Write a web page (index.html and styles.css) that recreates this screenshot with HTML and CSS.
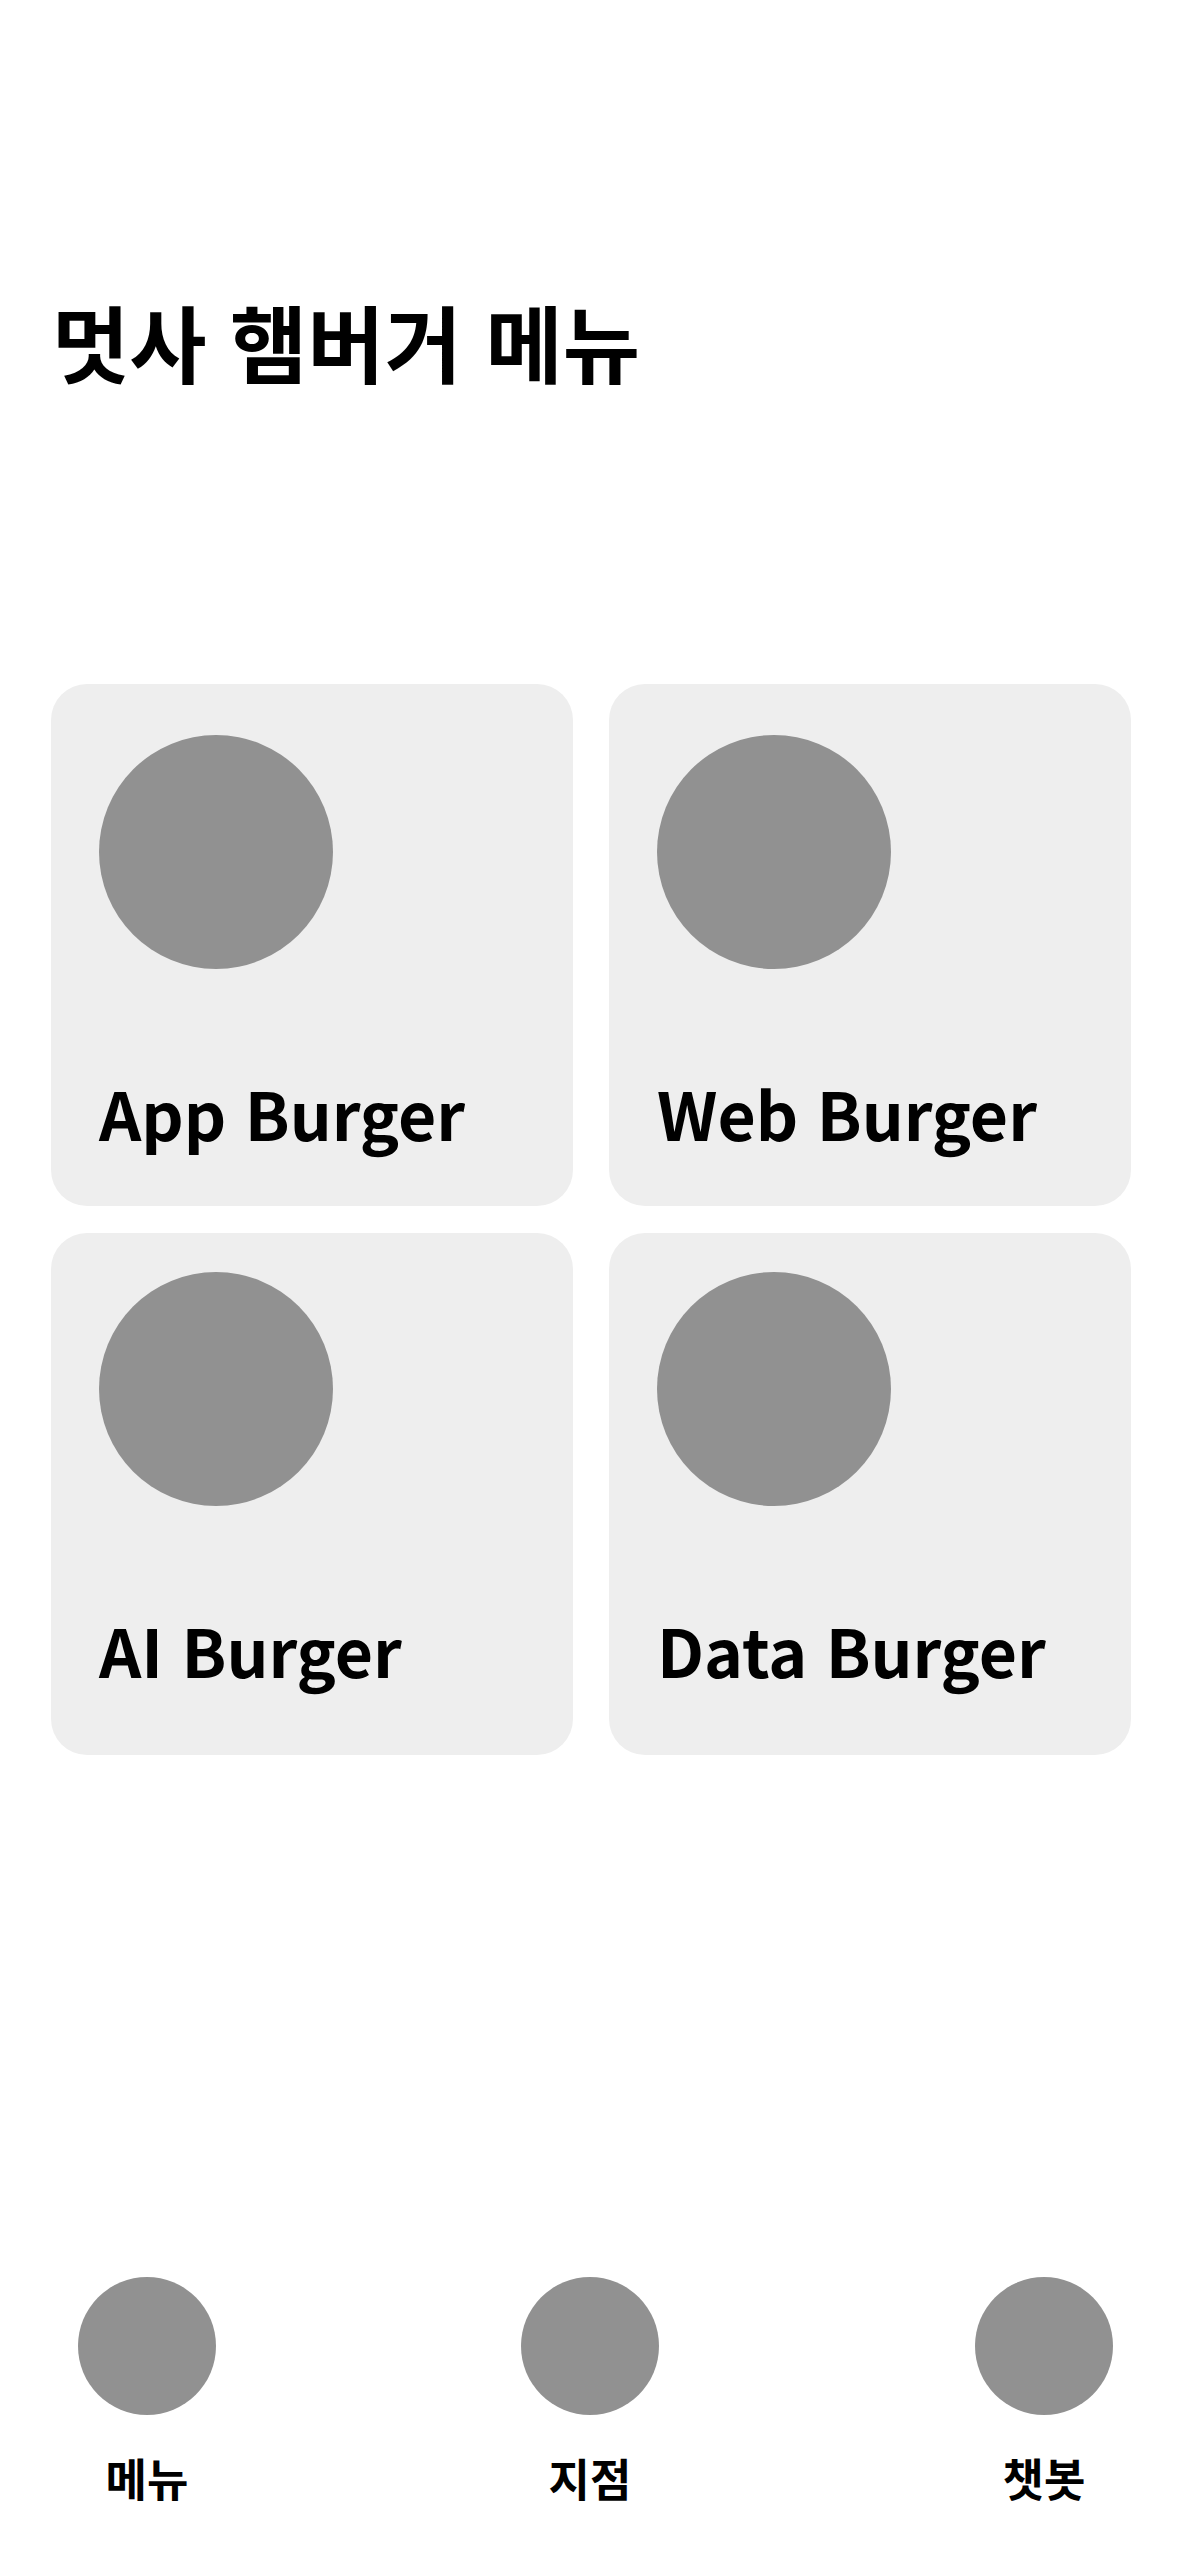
FILE: index.html
```html
<!DOCTYPE html>
<html lang="ko">
<head>
<meta charset="utf-8">
<title>멋사 햄버거 메뉴</title>
<link rel="stylesheet" href="styles.css">
</head>
<body>
<div class="screen">
  <header class="header">
    <h1 class="title">멋사 햄버거 메뉴</h1>
  </header>
  <main class="grid">
    <div class="card">
      <div class="thumb"></div>
      <div class="name">App Burger</div>
    </div>
    <div class="card">
      <div class="thumb"></div>
      <div class="name">Web Burger</div>
    </div>
    <div class="card card-low">
      <div class="thumb"></div>
      <div class="name">AI Burger</div>
    </div>
    <div class="card card-low">
      <div class="thumb"></div>
      <div class="name">Data Burger</div>
    </div>
  </main>
  <nav class="tabbar">
    <div class="tab">
      <div class="tab-icon"></div>
      <div class="tab-label">메뉴</div>
    </div>
    <div class="tab">
      <div class="tab-icon"></div>
      <div class="tab-label">지점</div>
    </div>
    <div class="tab">
      <div class="tab-icon"></div>
      <div class="tab-label">챗봇</div>
    </div>
  </nav>
</div>
</body>
</html>
```
FILE: styles.css
```css
html, body {
  margin: 0;
  padding: 0;
  background: #ffffff;
}
body {
  font-family: "Noto Sans CJK KR", "Noto Sans", sans-serif;
  color: #000000;
}
.screen {
  width: 1179px;
  height: 2556px;
  display: flex;
  flex-direction: column;
  box-sizing: border-box;
}
.header {
  padding: 291px 0 0 52px;
  height: 684px;
  box-sizing: border-box;
  flex: none;
}
.title {
  margin: 0;
  font-size: 84px;
  font-weight: 700;
  line-height: 1.2;
  letter-spacing: 0;
}
.grid {
  display: grid;
  grid-template-columns: 522px 522px;
  column-gap: 36px;
  row-gap: 27px;
  padding-left: 51px;
}
.card {
  height: 522px;
  box-sizing: border-box;
  background: #eeeeee;
  border-radius: 36px;
  padding: 51px 48px 0 48px;
  display: flex;
  flex-direction: column;
}
.card-low {
  padding-top: 39px;
}
.thumb {
  width: 234px;
  height: 234px;
  border-radius: 50%;
  background: #919191;
  flex: none;
}
.name {
  margin-top: 110px;
  font-size: 66px;
  font-weight: 700;
  line-height: 1;
  white-space: nowrap;
}
.tabbar {
  margin-top: auto;
  display: grid;
  grid-template-columns: 443px 454px 138px;
  padding: 0 0 51px 78px;
}
.tab {
  width: 138px;
  display: flex;
  flex-direction: column;
  align-items: center;
}
.tab-icon {
  width: 138px;
  height: 138px;
  border-radius: 50%;
  background: #919191;
}
.tab-label {
  margin-top: 36px;
  font-size: 45px;
  font-weight: 700;
  line-height: 1.2;
  white-space: nowrap;
}
```
